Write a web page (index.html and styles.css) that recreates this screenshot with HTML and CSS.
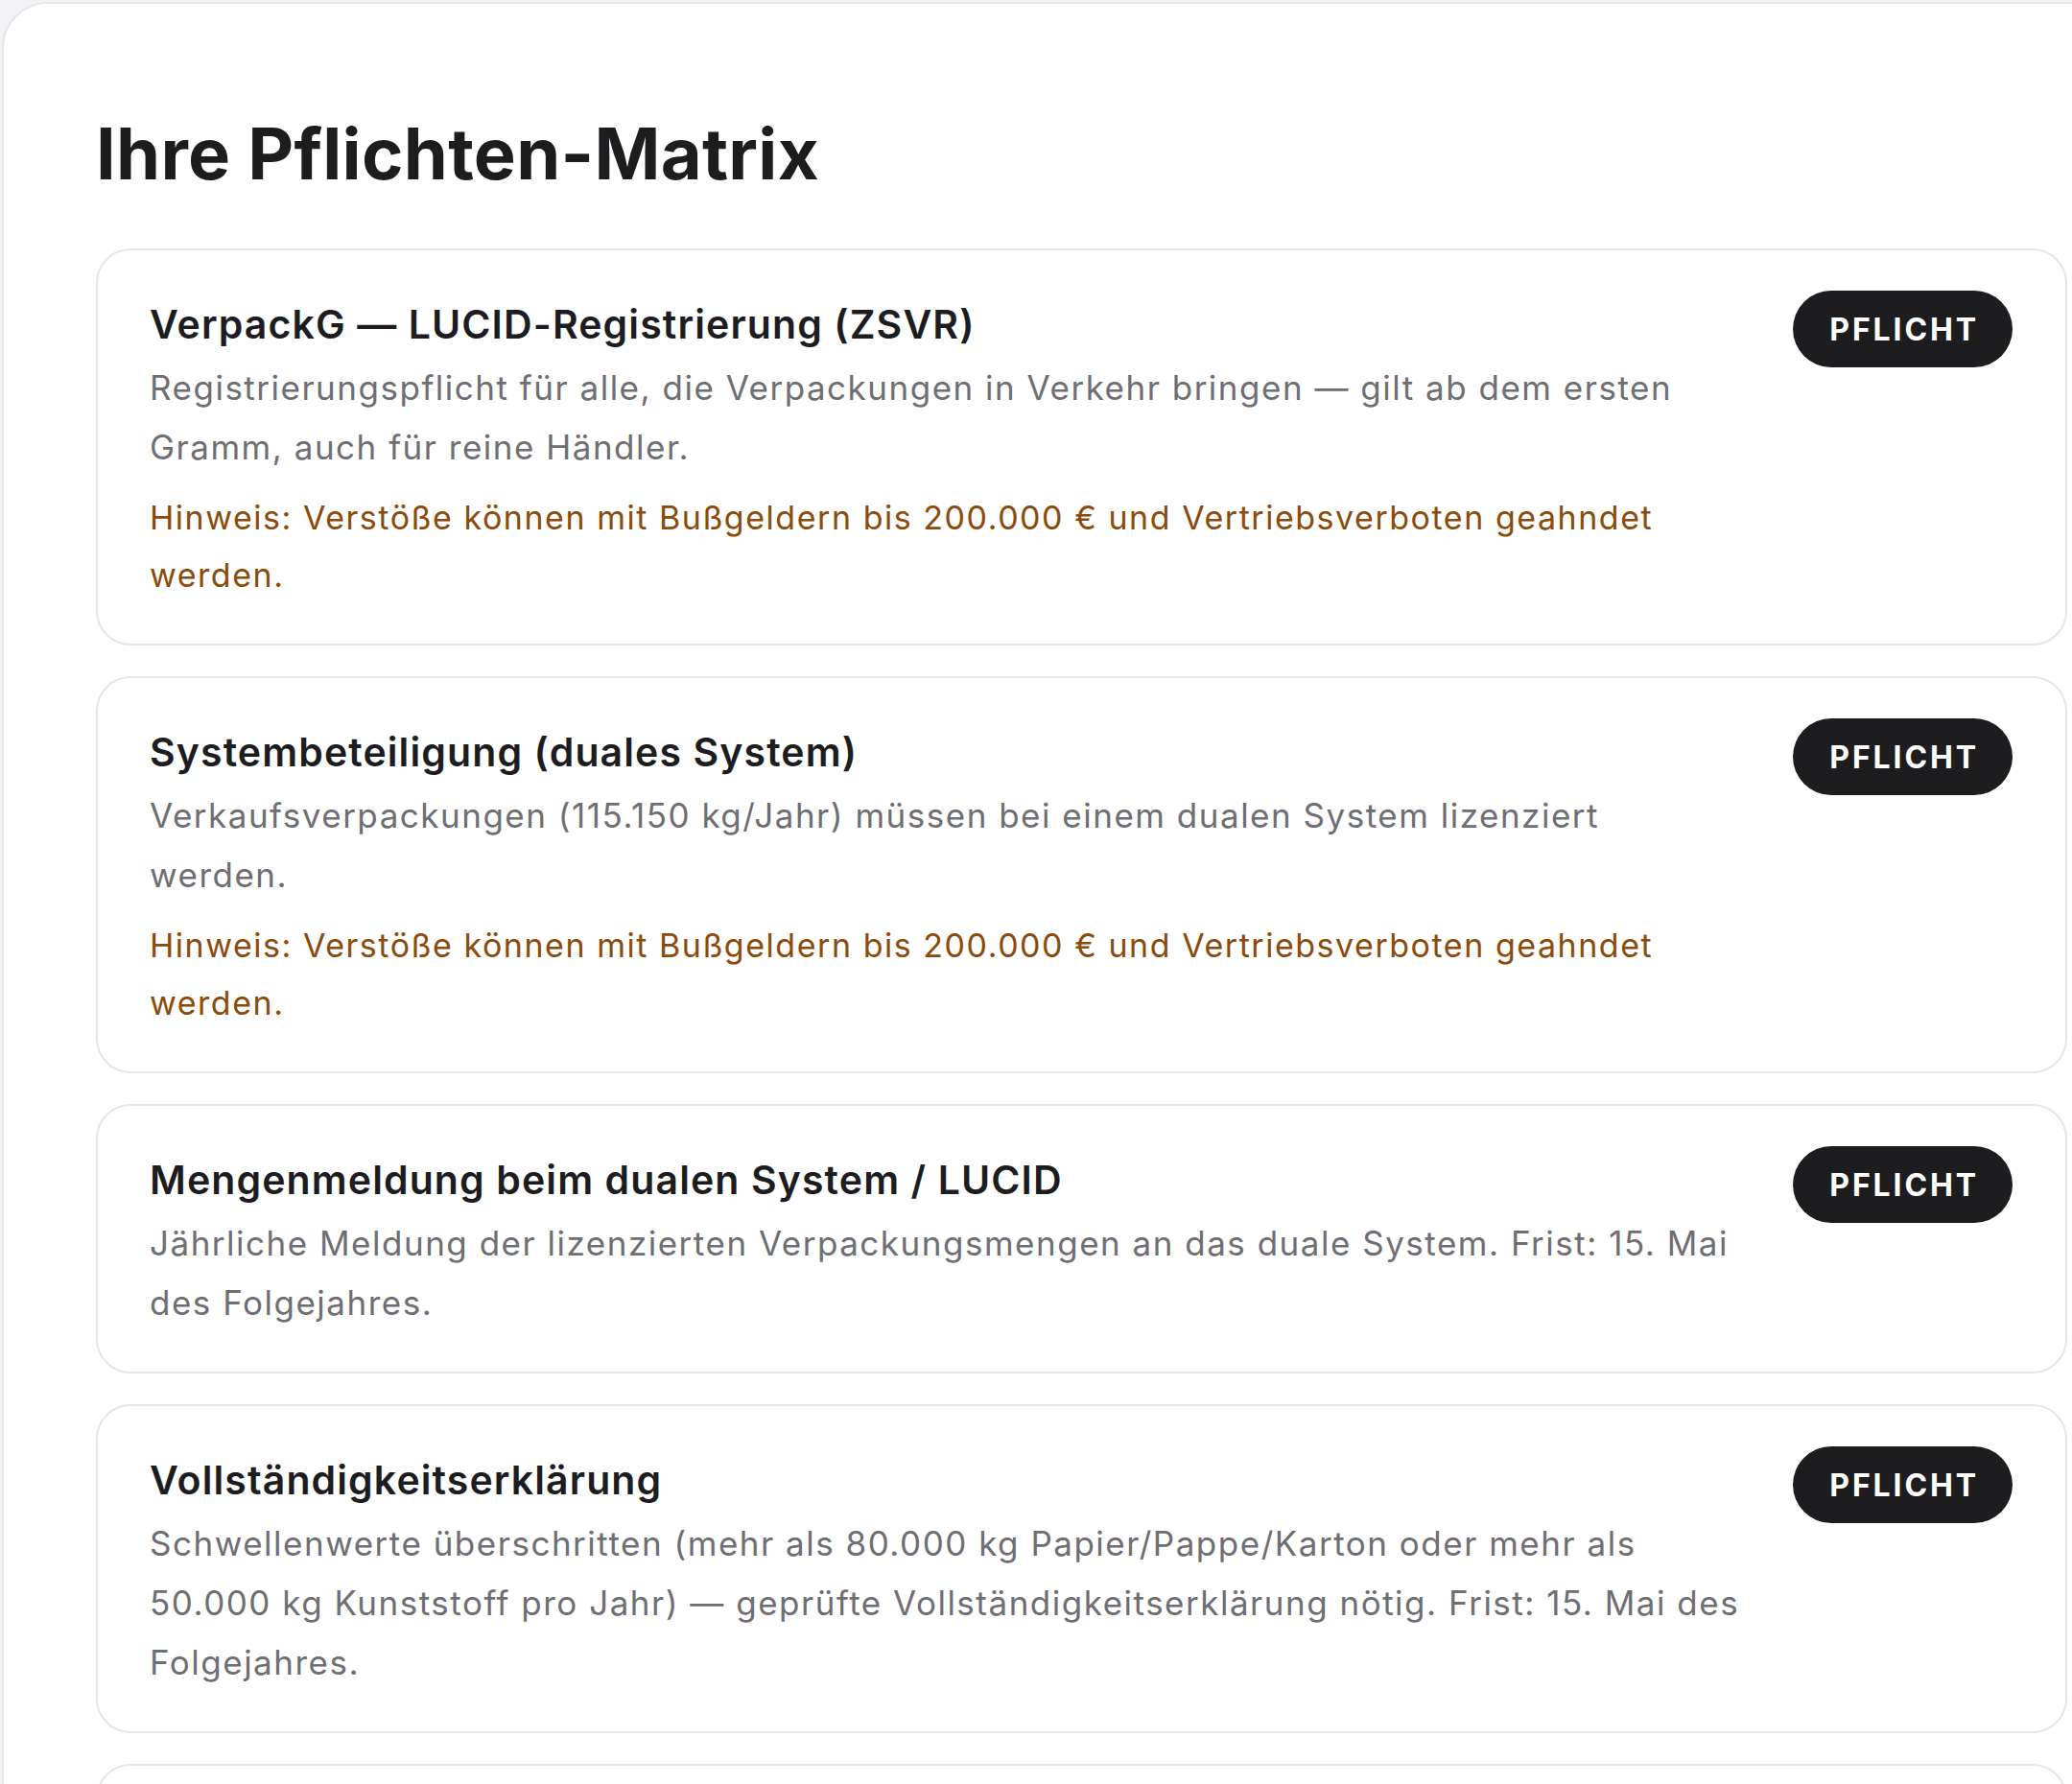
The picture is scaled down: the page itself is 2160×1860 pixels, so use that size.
FILE: index.html
```html
<!DOCTYPE html>
<html lang="de">
<head>
<meta charset="utf-8">
<title>Ihre Pflichten-Matrix</title>
<link rel="stylesheet" href="styles.css">
</head>
<body>
<main class="panel">
  <h1 class="panel-title">Ihre Pflichten-Matrix</h1>
  <div class="duty-list">
    <article class="duty">
      <div class="duty-body">
        <h2 class="duty-title">VerpackG — LUCID-Registrierung (ZSVR)</h2>
        <p class="duty-desc">Registrierungspflicht für alle, die Verpackungen in Verkehr bringen — gilt ab dem ersten Gramm, auch für reine Händler.</p>
        <p class="duty-note">Hinweis: Verstöße können mit Bußgeldern bis 200.000 € und Vertriebsverboten geahndet werden.</p>
      </div>
      <span class="badge">Pflicht</span>
    </article>
    <article class="duty">
      <div class="duty-body">
        <h2 class="duty-title">Systembeteiligung (duales System)</h2>
        <p class="duty-desc">Verkaufsverpackungen (115.150 kg/Jahr) müssen bei einem dualen System lizenziert werden.</p>
        <p class="duty-note">Hinweis: Verstöße können mit Bußgeldern bis 200.000 € und Vertriebsverboten geahndet werden.</p>
      </div>
      <span class="badge">Pflicht</span>
    </article>
    <article class="duty">
      <div class="duty-body">
        <h2 class="duty-title">Mengenmeldung beim dualen System / LUCID</h2>
        <p class="duty-desc">Jährliche Meldung der lizenzierten Verpackungsmengen an das duale System. Frist: 15. Mai des Folgejahres.</p>
      </div>
      <span class="badge">Pflicht</span>
    </article>
    <article class="duty">
      <div class="duty-body">
        <h2 class="duty-title">Vollständigkeitserklärung</h2>
        <p class="duty-desc">Schwellenwerte überschritten (mehr als 80.000 kg Papier/Pappe/Karton oder mehr als 50.000 kg Kunststoff pro Jahr) — geprüfte Vollständigkeitserklärung nötig. Frist: 15. Mai des Folgejahres.</p>
      </div>
      <span class="badge">Pflicht</span>
    </article>
    <article class="duty duty-more" aria-hidden="true"></article>
  </div>
</main>
</body>
</html>
```

FILE: styles.css
```css
* { box-sizing: border-box; }

html, body {
  margin: 0;
  padding: 0;
  overflow: hidden;
}

body {
  background: #f3f3f6;
  font-family: Inter, "Noto Sans", "Liberation Sans", sans-serif;
  color: #1d1d1f;
}

.panel {
  width: 2251px;
  margin: 2px 0 0 2px;
  padding: 110px 96px 96px 96px;
  background: #ffffff;
  border: 2px solid #e5e5ea;
  border-radius: 48px;
}

.panel-title {
  margin: 0 0 53px 0;
  font-size: 74px;
  line-height: 92px;
  font-weight: 700;
  letter-spacing: 0.004em;
  color: #1d1d1f;
}

.duty-list {
  display: flex;
  flex-direction: column;
  gap: 32px;
}

.duty {
  display: flex;
  align-items: flex-start;
  gap: 55px;
  padding: 42px 55px 41px 54px;
  border: 2px solid #e5e5ea;
  border-radius: 36px;
  background: #ffffff;
}

.duty-more {
  min-height: 240px;
}

.duty-body {
  flex: 1;
  min-width: 0;
}

.duty-title {
  margin: 0;
  font-size: 41px;
  line-height: 70px;
  font-weight: 600;
  letter-spacing: 0.027em;
  color: #1d1d1f;
}

.duty-desc {
  margin: 0;
  font-size: 35px;
  line-height: 62px;
  letter-spacing: 0.043em;
  color: #6e6e73;
}

.duty-note {
  margin: 13px 0 0 0;
  font-size: 34px;
  line-height: 60px;
  letter-spacing: 0.045em;
  color: #8a4b0c;
}

.badge {
  flex: none;
  display: flex;
  align-items: center;
  justify-content: center;
  height: 80px;
  padding: 0 35px 0 38px;
  border-radius: 999px;
  background: #1d1d1f;
  color: #ffffff;
  font-size: 32px;
  font-weight: 700;
  letter-spacing: 0.09em;
  text-transform: uppercase;
}
```
